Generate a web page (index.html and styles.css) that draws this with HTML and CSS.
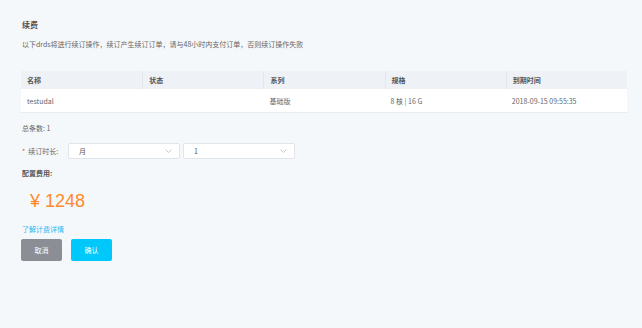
FILE: index.html
```html
<!DOCTYPE html>
<html lang="zh-CN">
<head>
    <meta charset="UTF-8">
    <title>续费</title>
    <link rel="stylesheet" href="styles.css">
</head>
<body>
    <div class="page">
        <div class="title">续费</div>
        <div class="desc">以下drds将进行续订操作，续订产生续订订单，请与48小时内支付订单，否则续订操作失败</div>

        <div class="table">
            <div class="table-head">
                <div class="cell">名称</div>
                <div class="cell">状态</div>
                <div class="cell">系列</div>
                <div class="cell">规格</div>
                <div class="cell">到期时间</div>
            </div>
            <div class="table-row">
                <div class="cell">testudal</div>
                <div class="cell"></div>
                <div class="cell">基础版</div>
                <div class="cell">8 核 | 16 G</div>
                <div class="cell">2018-09-15 09:55:35</div>
            </div>
        </div>

        <div class="total">总条数: 1</div>

        <div class="form-row">
            <div class="form-label"><span class="required">*</span>续订时长:</div>
            <div class="select">
                <span>月</span>
                <svg class="chevron" width="7" height="4" viewBox="0 0 7 4"><polyline points="0.5,0.5 3.5,3.5 6.5,0.5" fill="none" stroke="#b8bdc5" stroke-width="0.8"/></svg>
            </div>
            <div class="select">
                <span>1</span>
                <svg class="chevron" width="7" height="4" viewBox="0 0 7 4"><polyline points="0.5,0.5 3.5,3.5 6.5,0.5" fill="none" stroke="#b8bdc5" stroke-width="0.8"/></svg>
            </div>
        </div>

        <div class="fee-label">配置费用:</div>
        <div class="price">¥ 1248</div>

        <a class="link" href="#">了解计费详情</a>

        <div class="buttons">
            <button class="btn btn-cancel">取消</button>
            <button class="btn btn-ok">确认</button>
        </div>
    </div>
</body>
</html>
```

FILE: styles.css
```css
* {
    margin: 0;
    padding: 0;
    box-sizing: border-box;
}

body {
    font-family: "Noto Sans CJK SC", "Noto Sans", sans-serif;
    font-size: 7px;
    color: #666;
    background: #f5f8fb;
    min-height: 100vh;
}

.page {
    padding: 19px 15px 0 21px;
}

.title {
    font-size: 8px;
    font-weight: 500;
    line-height: 12px;
    color: #333;
    padding-left: 1px;
}

.desc {
    margin-top: 7px;
    line-height: 12px;
    padding-left: 1px;
}

.table {
    margin-top: 21px;
}

.table-head,
.table-row {
    display: grid;
    grid-template-columns: repeat(5, 1fr);
    align-items: center;
}

.table-head {
    height: 18px;
    background: #eef2f7;
    font-weight: 600;
    color: #555;
}

.table-head .cell + .cell {
    border-left: 1px solid #e2e7ee;
}

.table-row {
    height: 24px;
    background: #fff;
    border-bottom: 1px solid #e8ecf1;
}

.cell {
    padding-left: 6px;
    line-height: 18px;
}

.total {
    margin-top: 9px;
    line-height: 12px;
    padding-left: 1px;
}

.form-row {
    display: flex;
    align-items: center;
    margin-top: 9px;
    height: 16px;
}

.form-label {
    width: 47px;
    padding-left: 1px;
}

.required {
    color: #f04848;
    margin-right: 3px;
}

.select {
    display: flex;
    align-items: center;
    justify-content: space-between;
    width: 112px;
    height: 16px;
    margin-right: 3px;
    padding: 0 7px 0 10px;
    background: #fff;
    border: 1px solid #e1e5eb;
    border-radius: 2px;
    color: #555;
}

.fee-label {
    margin-top: 8px;
    line-height: 12px;
    font-weight: 600;
    color: #555;
    padding-left: 1px;
}

.price {
    margin-top: 10px;
    padding-left: 9px;
    font-family: "Liberation Sans", sans-serif;
    font-size: 18px;
    line-height: 24px;
    color: #ff8a2c;
}

.link {
    display: block;
    margin-top: 10px;
    line-height: 12px;
    color: #2cb6f2;
    text-decoration: none;
    padding-left: 1px;
}

.buttons {
    display: flex;
    gap: 9px;
    margin-top: 4px;
}

.btn {
    width: 41px;
    height: 22px;
    border: none;
    border-radius: 2px;
    font-family: inherit;
    font-size: 7px;
    color: #fff;
}

.btn-cancel {
    background: #8b8e94;
}

.btn-ok {
    background: #00c8fb;
}
```
